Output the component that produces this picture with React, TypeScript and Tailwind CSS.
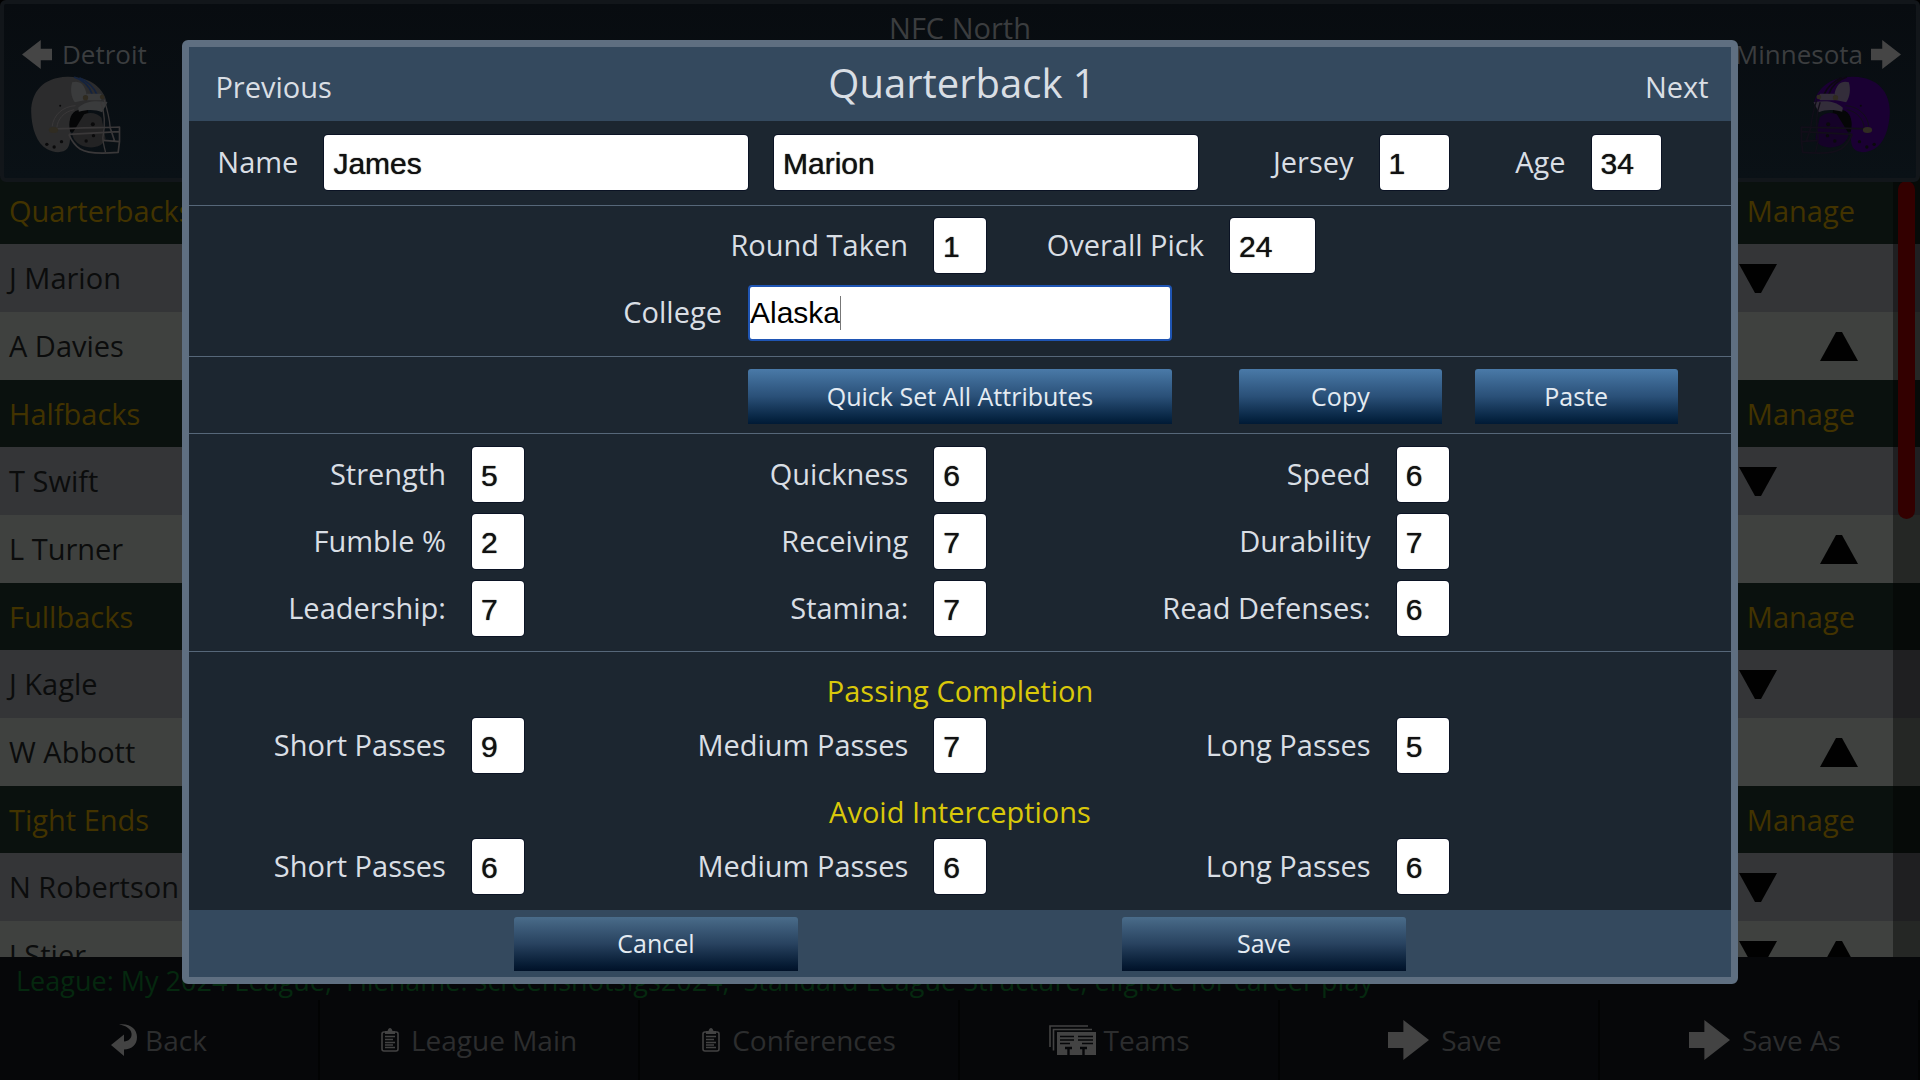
import React, { useState } from 'react';

interface HelmetProps {
  shell: string;
  stripe: string;
  panel: string;
  mask: string;
  inner: string;
  className?: string;
}

interface Player {
  name: string;
  down?: boolean;
  up?: boolean;
}

interface Group {
  title: string;
  players: Player[];
}

interface FieldProps {
  id: string;
  label: string;
  value: string;
  onChange: (id: string, value: string) => void;
}

const roster: Group[] = [
  { title: 'Quarterbacks', players: [{ name: 'J Marion', down: true }, { name: 'A Davies', up: true }] },
  { title: 'Halfbacks', players: [{ name: 'T Swift', down: true }, { name: 'L Turner', up: true }] },
  { title: 'Fullbacks', players: [{ name: 'J Kagle', down: true }, { name: 'W Abbott', up: true }] },
  { title: 'Tight Ends', players: [{ name: 'N Robertson', down: true }, { name: 'J Stier', down: true, up: true }] }
];

const attributes = [
  ['strength', 'Strength'],
  ['quickness', 'Quickness'],
  ['speed', 'Speed'],
  ['fumble', 'Fumble %'],
  ['receiving', 'Receiving'],
  ['durability', 'Durability'],
  ['leadership', 'Leadership:'],
  ['stamina', 'Stamina:'],
  ['readDefenses', 'Read Defenses:']
];

const completion = [
  ['compShort', 'Short Passes'],
  ['compMedium', 'Medium Passes'],
  ['compLong', 'Long Passes']
];

const interceptions = [
  ['intShort', 'Short Passes'],
  ['intMedium', 'Medium Passes'],
  ['intLong', 'Long Passes']
];

const inputClass =
  "h-[55px] rounded-[4px] bg-white pt-0.5 pr-2 pl-[9px] font-['Liberation_Sans',Arial,sans-serif] text-[30px] text-[#111] outline-none shadow-[0_0_0_1px_#0b1324] [text-shadow:0_0_1px_#111]";
const buttonClass =
  'h-[55px] rounded-t-[3px] bg-linear-to-b from-[#4a7aa8] via-[#2a5078] to-[#011a35] text-[25px] text-[#e4ebf2]';
const footerButtonClass =
  'h-[54px] w-[284px] rounded-t-[3px] bg-linear-to-b from-[#4a6c8a] via-[#28425f] to-[#011128] text-[25px] text-[#e4ebf2]';

function ArrowIcon({ className }: { className?: string }) {
  return (
    <svg viewBox="0 0 40 40" preserveAspectRatio="none" className={className} fill="currentColor">
      <path d="M0 12H15V0L40 20L15 40V28H0Z" />
    </svg>
  );
}

function ClipboardIcon() {
  return (
    <svg viewBox="0 0 18 24" className="h-6 w-[18px]" fill="none" stroke="currentColor">
      <rect x="1" y="4" width="16" height="19" rx="2" strokeWidth="1.6" />
      <path d="M4 6V3H6.500C7 1 8 0 9 0S11 1 11.500 3H14V6Z" fill="currentColor" stroke="none" />
      <path d="M4 8.500H14M4 11.500H12M4 14.500H14M4 17H12M4 19.500H14" strokeWidth="1.3" />
    </svg>
  );
}

function BackIcon() {
  return (
    <svg viewBox="0 0 26 32" className="h-8 w-[26px]" fill="currentColor">
      <path d="M8 0.500C19-1 26 5 26 13C26 21 21 25 13 25.500V32L0 21L13 10.500V17.500C18 17 21 14 20.500 9.500C20 5 15 1.500 8 0.500Z" />
    </svg>
  );
}

function TeamsIcon() {
  return (
    <svg viewBox="0 0 47 30" className="h-[30px] w-[47px]" fill="none" stroke="currentColor">
      <path d="M1 22V1H39M4.500 25.500V4.500H43" strokeWidth="1.6" />
      <path d="M8 7H47V30H8Z" fill="currentColor" stroke="none" />
      <path d="M11 11.500H25M29 11.500H44M11 15H25M29 15H44M11 18.500H21M33 18.500H44" stroke="#060709" strokeWidth="1.4" />
      <path d="M16 23H23M19.500 23V30M31 23H38M34.500 23V30" stroke="#060709" strokeWidth="2.4" />
    </svg>
  );
}

function Helmet({ shell, stripe, panel, mask, inner, className }: HelmetProps) {
  return (
    <svg viewBox="90 133 272 234" className={className} fill="none">
      <path
        d="M200 135C130 137 93 180 93 240C94 290 110 335 140 352C160 364 190 366 202 350C212 336 208 318 212 304C206 280 208 258 222 242L320 214C312 170 270 133 200 135Z"
        fill={shell}
      />
      <path d="M216 152C226 148 240 150 246 158C256 170 260 184 260 204L224 212C212 196 210 172 216 152Z" fill={panel} />
      <path d="M222 136C252 146 268 164 276 188M238 138C264 150 282 168 290 188" stroke={stripe} strokeWidth="5" />
      <path d="M210 300C204 270 210 248 226 238L262 226L266 262L236 300Z" fill="#050607" />
      <path d="M252 248C270 240 292 244 304 258L316 320C310 346 276 352 250 344C230 336 218 322 216 306Z" fill={inner} />
      <path d="M234 228C258 206 290 206 322 212L306 242C284 232 260 234 236 240Z" fill={panel} />
      <path d="M226 222C188 224 160 250 156 284M222 234C190 240 172 264 170 288" stroke={mask} strokeWidth="3" />
      <rect x="258" y="186" width="46" height="20" rx="3" fill={panel} />
      <circle cx="256" cy="198" r="8" fill="#302b20" />
      <circle cx="306" cy="196" r="7" fill="#302b20" />
      <path d="M312 204C322 236 328 260 330 288M302 212C312 240 316 280 308 318C308 336 314 350 316 362" stroke={mask} strokeWidth="4" />
      <path
        d="M160 292C230 288 300 288 358 286V330L354 362C310 366 262 366 240 352C222 340 212 322 206 308M206 308L358 300M330 288L344 330M310 326L358 330"
        stroke={mask}
        strokeWidth="5"
        strokeLinejoin="round"
      />
      <ellipse cx="160" cy="295" rx="14" ry="9" fill="#302c22" />
      <g fill="#0a0a0b">
        <circle cx="278" cy="278" r="6" />
        <circle cx="280" cy="312" r="5" />
        <circle cx="258" cy="328" r="5" />
        <circle cx="140" cy="338" r="5" />
        <circle cx="162" cy="346" r="5" />
        <circle cx="184" cy="330" r="5" />
        <circle cx="180" cy="222" r="3" />
      </g>
    </svg>
  );
}

function TeamHeader() {
  return (
    <header className="relative z-10 grid h-[182px] shrink-0 grid-cols-[1fr_auto_1fr] rounded-md border-4 border-[#12161a] bg-linear-to-b from-[#080c10] to-[#0a1116] text-[#3b3d3f]">
      <div className="pt-8 pl-[18px]">
        <button className="flex h-9 items-center gap-[10px] text-[26px]">
          <ArrowIcon className="h-[29px] w-[30px] -scale-x-100 text-[#454545]" />
          Detroit
        </button>
        <Helmet shell="#2c2c2d" stripe="#14233f" panel="#3a3b3c" mask="#3a3839" inner="#232324" className="mt-1 ml-2 h-[78px] w-[91px]" />
      </div>
      <h2 className="pt-1 text-[29px] leading-10">NFC North</h2>
      <div className="flex flex-col items-end pt-8 pr-[15px]">
        <button className="flex h-9 items-center gap-2 text-[26px]">
          Minnesota
          <ArrowIcon className="h-[29px] w-[30px] text-[#454545]" />
        </button>
        <Helmet shell="#1a0033" stripe="#0d0812" panel="#332d3a" mask="#120e19" inner="#150228" className="mt-1 mr-[10px] h-[78px] w-[91px] -scale-x-100" />
      </div>
    </header>
  );
}

function MoveButton({ dir, show, name }: { dir: 'up' | 'down'; show?: boolean; name: string }) {
  if (!show) return <span className="w-[38px]" />;
  return (
    <button aria-label={`Move ${name} ${dir}`} className="w-[38px]">
      <svg viewBox="0 0 38 29" className="h-[29px] w-[38px]">
        <path d={dir === 'down' ? 'M0 0H38L22 29H16Z' : 'M16 0H22L38 29H0Z'} fill="#010101" />
      </svg>
    </button>
  );
}

function Roster() {
  return (
    <main className="relative -mt-[5px] min-h-0 flex-1 overflow-hidden text-[29px]">
      {roster.map(group => (
        <section key={group.title}>
          <div className="flex h-[67px] items-center justify-between bg-[#0a110e] pr-[65px] pl-[9px] text-[#423300]">
            <h3>{group.title}</h3>
            <button>Manage</button>
          </div>
          {group.players.map(player => (
            <div
              key={player.name}
              className="flex h-[68px] items-center gap-[43px] pr-[62px] pl-[9px] text-[#0b0c0c] odd:bg-[#3f413f] even:bg-[#343537]"
            >
              <span className="flex-1">{player.name}</span>
              <MoveButton dir="down" show={player.down} name={player.name} />
              <MoveButton dir="up" show={player.up} name={player.name} />
            </div>
          ))}
        </section>
      ))}
      <div className="absolute inset-y-0 right-0 w-[27px] bg-black/40 pt-1 pl-[5px]">
        <div className="h-[338px] w-[17px] rounded-full bg-[#330000]" />
      </div>
    </main>
  );
}

function BottomBar() {
  const items = [
    { label: 'Back', icon: <BackIcon />, gap: 'gap-2' },
    { label: 'League Main', icon: <ClipboardIcon />, gap: 'gap-3' },
    { label: 'Conferences', icon: <ClipboardIcon />, gap: 'gap-3' },
    { label: 'Teams', icon: <TeamsIcon />, gap: 'gap-2' },
    { label: 'Save', icon: <ArrowIcon className="h-10 w-[41px]" />, gap: 'gap-3 pl-3' },
    { label: 'Save As', icon: <ArrowIcon className="h-10 w-[41px]" />, gap: 'gap-3 pl-3' }
  ];

  return (
    <footer className="shrink-0 bg-[#060709]">
      <p className="h-[43px] overflow-hidden pt-1 pl-4 text-[27px] leading-10 whitespace-pre text-[#05280f]">
        {'League: My 2024 League,  Filename: screenshotslgs2024,  Standard League Structure, eligible for career play'}
      </p>
      <nav className="grid h-20 grid-cols-6 text-[28px] text-[#2c2d2e]">
        {items.map(item => (
          <button key={item.label} className={`flex items-center justify-center border-r-2 border-[#020303] ${item.gap}`}>
            <span className="text-[#434343]">{item.icon}</span>
            {item.label}
          </button>
        ))}
      </nav>
    </footer>
  );
}

function StatField({ id, label, value, onChange }: FieldProps) {
  return (
    <div className="grid grid-cols-[11fr_7fr] items-center">
      <label htmlFor={id} className="pr-[26px] pb-0.5 text-right whitespace-nowrap">
        {label}
      </label>
      <input id={id} value={value} onChange={e => onChange(id, e.target.value)} className={`${inputClass} w-[52px]`} />
    </div>
  );
}

export default function App() {
  const [form, setForm] = useState<Record<string, string>>({
    firstName: 'James',
    lastName: 'Marion',
    jersey: '1',
    age: '34',
    round: '1',
    pick: '24',
    college: 'Alaska',
    strength: '5',
    quickness: '6',
    speed: '6',
    fumble: '2',
    receiving: '7',
    durability: '7',
    leadership: '7',
    stamina: '7',
    readDefenses: '6',
    compShort: '9',
    compMedium: '7',
    compLong: '5',
    intShort: '6',
    intMedium: '6',
    intLong: '6'
  });

  const update = (id: string, value: string) => setForm(prev => ({ ...prev, [id]: value }));
  const handleChange = (e: React.ChangeEvent<HTMLInputElement>) => update(e.target.id, e.target.value);

  const renderStats = (stats: string[][]) => (
    <div className="grid grid-cols-[30%_30%_30%] gap-y-3">
      {stats.map(([id, label]) => (
        <StatField key={id} id={id} label={label} value={form[id]} onChange={update} />
      ))}
    </div>
  );

  return (
    <div className="relative flex h-screen flex-col overflow-hidden bg-black font-['Open_Sans','Noto_Sans',sans-serif]">
      <TeamHeader />
      <Roster />
      <BottomBar />

      <div className="absolute inset-0 z-20 flex items-start justify-center pt-10">
        <form
          onSubmit={e => e.preventDefault()}
          className="w-[81%] rounded-md border-[7px] border-[#5f6f81] bg-[#1c2630] text-[29px] text-[#d9dee4]"
        >
          <div className="grid h-[74px] grid-cols-[1fr_auto_1fr] items-baseline bg-[#34495e] pt-1.5 pr-[22px] pl-[26px]">
            <button type="button" className="justify-self-start">
              Previous
            </button>
            <h1 className="text-center text-[40px]">Quarterback 1</h1>
            <button type="button" className="justify-self-end">
              Next
            </button>
          </div>

          <div className="flex items-center border-b border-[#566779] pt-[14px] pr-[70px] pb-[15px]">
            <label htmlFor="firstName" className="w-[109px] pb-0.5 text-right">
              Name
            </label>
            <input id="firstName" value={form.firstName} onChange={handleChange} className={`${inputClass} ml-[26px] min-w-0 flex-1`} />
            <input id="lastName" aria-label="Last name" value={form.lastName} onChange={handleChange} className={`${inputClass} ml-[26px] min-w-0 flex-1`} />
            <label htmlFor="jersey" className="w-[156px] pb-0.5 text-right">
              Jersey
            </label>
            <input id="jersey" value={form.jersey} onChange={handleChange} className={`${inputClass} ml-[26px] w-[69px]`} />
            <label htmlFor="age" className="w-[117px] pb-0.5 text-right">
              Age
            </label>
            <input id="age" value={form.age} onChange={handleChange} className={`${inputClass} ml-[26px] w-[69px]`} />
          </div>

          <div className="flex flex-col gap-3 border-b border-[#566779] pt-3 pb-[15px]">
            <div className="grid grid-cols-[1fr_auto_1fr] items-center">
              <label htmlFor="round" className="pr-[26px] pb-0.5 text-right">
                Round Taken
              </label>
              <input id="round" value={form.round} onChange={handleChange} className={`${inputClass} w-[52px]`} />
              <div className="flex items-center">
                <label htmlFor="pick" className="w-[218px] pb-0.5 text-right">
                  Overall Pick
                </label>
                <input id="pick" value={form.pick} onChange={handleChange} className={`${inputClass} ml-[26px] w-[85px]`} />
              </div>
            </div>
            <div className="grid grid-cols-[1fr_424px_1fr] items-center">
              <label htmlFor="college" className="pr-[26px] pb-0.5 text-right">
                College
              </label>
              <div className="relative">
                <input
                  id="college"
                  value={form.college}
                  onChange={handleChange}
                  className="block h-14 w-full rounded-[4px] border-2 border-[#1f55b4] bg-white font-['Liberation_Sans',Arial,sans-serif] text-[30px] text-black outline-none"
                />
                <span className="absolute top-[11px] left-[92px] h-[34px] w-px bg-[#777]" />
              </div>
            </div>
          </div>

          <div className="grid grid-cols-[1fr_424px_1fr] border-b border-[#566779] pt-3 pb-[9px]">
            <button type="button" className={`${buttonClass} col-start-2`}>
              Quick Set All Attributes
            </button>
            <div className="flex gap-[33px] pr-[53px] pl-[67px]">
              <button type="button" className={`${buttonClass} flex-1`}>
                Copy
              </button>
              <button type="button" className={`${buttonClass} flex-1`}>
                Paste
              </button>
            </div>
          </div>

          <div className="border-b border-[#566779] pt-[13px] pb-[15px]">{renderStats(attributes)}</div>

          <div className="pt-5 pb-4">
            <h2 className="mb-2 text-center leading-[38px] text-[#d9c80a]">Passing Completion</h2>
            {renderStats(completion)}
            <h2 className="mt-5 mb-2 text-center leading-[38px] text-[#d9c80a]">Avoid Interceptions</h2>
            {renderStats(interceptions)}
          </div>

          <div className="flex justify-center gap-[324px] bg-[#34495e] pt-[7px] pb-[6px]">
            <button type="button" className={footerButtonClass}>
              Cancel
            </button>
            <button type="submit" className={footerButtonClass}>
              Save
            </button>
          </div>
        </form>
      </div>
    </div>
  );
}
